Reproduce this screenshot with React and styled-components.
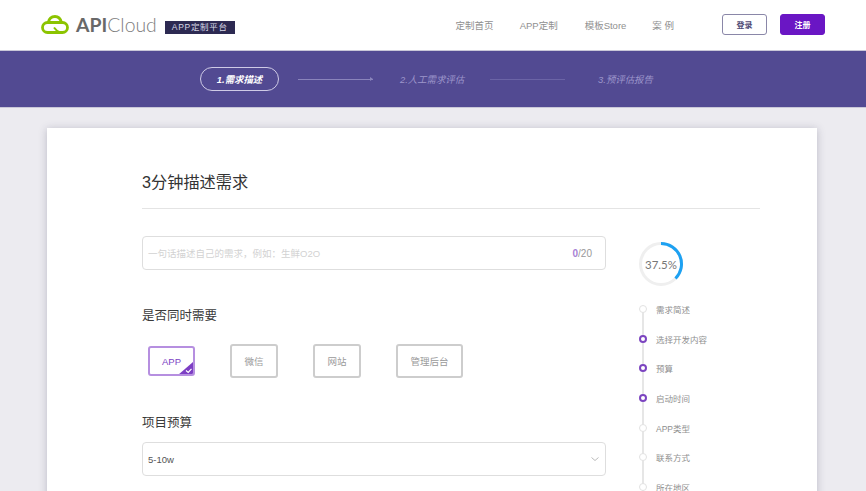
import React from "react";
import styled, { createGlobalStyle } from "styled-components";

const Global = createGlobalStyle`
  html, body { margin: 0; padding: 0; height: 491px; overflow: hidden; background: #ecebf0; }
  body { font-family: "Open Sans", "Noto Sans CJK SC", sans-serif; }
  * { box-sizing: border-box; }
`;
const CJK = `"Liberation Sans", "Noto Sans CJK SC", sans-serif`;

const Page = styled.div`width: 866px; height: 491px; overflow: hidden; font-family: ${CJK};`;
const Header = styled.header`
  height: 51px; background: #fff; display: flex; align-items: center;
  padding: 0 41px 1px 41px; border-bottom: 1px solid #c9c7d8;
`;
const Logo = styled.div`display: flex; align-items: center; height: 32px;`;
const LogoText = styled.span`
  font-family: "Lato", sans-serif; font-size: 19.4px; color: #7d7d7d; margin-left: 7px; font-weight: 300;
  b { font-weight: 700; color: #686868; }
`;
const Badge = styled.span`
  background: #2d2a52; color: #d8d8e6; font-size: 8.5px; letter-spacing: .7px; height: 13px; line-height: 13px;
  padding: 0 0 0 7px; width: 70px; margin: 5px 0 0 8px; white-space: nowrap;
`;
const Nav = styled.nav`display: flex; align-items: center; margin-left: auto; font-size: 9.5px; color: #909090;`;
const NavLink = styled.a`margin-right: ${p => p.$gap}px; white-space: nowrap;`;
const Btn = styled.button`
  width: 45px; height: 21px; border-radius: 3px; font: 700 8px ${CJK}; padding: 0; margin-left: ${p => p.$ml}px;
  color: ${p => p.$solid ? "#fff" : "#4e4a74"}; background: ${p => p.$solid ? "#6a16c4" : "#fff"};
  border: 1px solid ${p => p.$solid ? "#6a16c4" : "#8a87a8"};
`;
const Steps = styled.div`
  height: 57px; background: #524a92; border-bottom: 1px solid #c9c7d8; display: flex; align-items: center; padding: 0 0 0 200px;
  font-size: 9.4px; font-style: italic; color: #9d96cb;
`;
const ActiveStep = styled.div`
  width: 79px; height: 24px; border: 1px solid #cfcbe6; border-radius: 12px; color: #fff; display: flex;
  align-items: center; justify-content: center; font-weight: 700;
`;
const Arrow = styled.div`
  width: 75px; height: 1px; margin: 0 ${p => p.$mr}px 0 ${p => p.$ml}px; background: ${p => p.$c}; position: relative;
  ${p => p.$tip && `&::after { content: ""; position: absolute; right: 0; top: -1.5px; border-left: 3px solid ${p.$c}; border-top: 2px solid transparent; border-bottom: 2px solid transparent; }`}
`;
const StepLabel = styled.span`white-space: nowrap;`;
const Main = styled.main`padding: 20px 49px 0 47px;`;
const Card = styled.section`
  background: #fff; height: 400px; padding: 43px 57px 0 95px; box-shadow: 0 1px 8px rgba(60,60,90,.28);
`;
const Title = styled.h1`
  margin: 0; font: 400 16.2px/22px ${CJK}; color: #333; height: 38px; border-bottom: 1px solid #e4e4e4;
`;
const Columns = styled.div`display: flex; margin-top: 27px;`;
const Left = styled.div`width: 464px;`;
const Field = styled.div`
  height: ${p => p.$h}px; border: 1px solid #dedede; border-radius: 4px; display: flex; align-items: center;
  justify-content: space-between; padding: 0 13px 0 5px; font-size: 9.5px; color: #d2d2d2; white-space: nowrap;
`;
const Count = styled.span`color: #999; font-size: 10px; b { color: #a77fd6; }`;
const Label = styled.h2`margin: ${p => p.$mt}px 0 0; font: 400 12.5px/18px ${CJK}; color: #3a3a3a;`;
const Options = styled.div`display: flex; gap: 35px; margin: 19px 0 0 6px; align-items: center;`;
const Option = styled.div`
  width: ${p => p.$w}px; height: 34px; border: 2px solid #cdcdcd; border-radius: 3px; display: flex; align-items: center;
  justify-content: center; font-size: 9.5px; color: #9a9a9a; background: #fff;
`;
const Selected = styled(Option)`
  width: 47px; height: 30px; border-color: #b68fe0; color: #7d3fc4; position: relative; overflow: hidden;
`;
const Corner = styled.svg`position: absolute; right: -1px; bottom: -1px;`;
const Select = styled(Field)`color: #555; padding-right: 5px; margin-top: ${p => p.$mt}px;`;
const Side = styled.aside`margin: 5px 0 0 32px; width: 120px;`;
const Ring = styled.div`
  width: 46px; height: 46px; position: relative; display: flex; align-items: center; justify-content: center;
  font: 400 11.5px "Lato", sans-serif; color: #777;
  svg { position: absolute; inset: 0; }
`;
const Timeline = styled.ul`list-style: none; margin: 7px 0 0; padding: 0 0 0 1px;`;
const TItem = styled.li`
  height: 29.7px; display: flex; align-items: center; gap: 9px; font-size: 8.5px; color: #8f8f8f; position: relative; white-space: nowrap;
  &::before { content: ""; position: absolute; left: 3px; top: 14px; width: 2px; height: 30px; background: #e6e6e6; }
`;
const Dot = styled.i`
  width: 8px; height: 8px; border-radius: 50%; background: #fff; position: relative; z-index: 1; flex: none;
  border: ${p => p.$on ? "2px solid #7c45c0" : "1.5px solid #e2e2e2"};
`;

const timeline = [["需求简述"], ["选择开发内容", 1], ["预算", 1], ["启动时间", 1], ["APP类型"], ["联系方式"], ["所在地区"]];

export default function App() {
  return (
    <Page>
      <Global />
      <Header>
        <Logo>
          <svg width="28" height="19" viewBox="0 0 28 19" fill="none" stroke="#8cc400" strokeWidth="2.8">
            <path d="M7 8C8 3.5 11 1.5 14 1.5c3.5 0 5.5 2 6.5 6" />
            <rect x="1.5" y="7.5" width="25" height="10" rx="5" />
            <path d="M13 12.5c2 3 4 4 6 5" strokeWidth="2" />
          </svg>
          <LogoText><b>API</b>Cloud</LogoText>
          <Badge>APP定制平台</Badge>
        </Logo>
        <Nav>
          <NavLink $gap={26}>定制首页</NavLink>
          <NavLink $gap={27}>APP定制</NavLink>
          <NavLink $gap={26}>模板Store</NavLink>
          <NavLink $gap={0}>案 例</NavLink>
          <Btn $ml={48}>登录</Btn>
          <Btn $solid $ml={13}>注册</Btn>
        </Nav>
      </Header>
      <Steps>
        <ActiveStep>1.需求描述</ActiveStep>
        <Arrow $c="#8a84bb" $tip $ml={19} $mr={27} />
        <StepLabel>2.人工需求评估</StepLabel>
        <Arrow $c="#6b64a6" $ml={26} $mr={33} />
        <StepLabel>3.预评估报告</StepLabel>
      </Steps>
      <Main>
        <Card>
          <Title>3分钟描述需求</Title>
          <Columns>
            <Left>
              <Field $h={34}>
                <span>一句话描述自己的需求，例如：生鲜O2O</span>
                <Count><b>0</b>/20</Count>
              </Field>
              <Label $mt={37}>是否同时需要</Label>
              <Options>
                <Selected>
                  APP
                  <Corner width="16" height="14" viewBox="0 0 16 14">
                    <path d="M16 0V14H0Z" fill="#7d3fc4" />
                    <path d="M8 9.5l2.2 2 3.3-3.6" stroke="#fff" strokeWidth="1.2" fill="none" />
                  </Corner>
                </Selected>
                <Option $w={48}>微信</Option>
                <Option $w={48}>网站</Option>
                <Option $w={67}>管理后台</Option>
              </Options>
              <Label $mt={36}>项目预算</Label>
              <Select $h={34} $mt={10}>
                <span>5-10w</span>
                <svg width="10" height="10" viewBox="0 0 10 10" fill="none" stroke="#bbb" strokeWidth="1">
                  <path d="M1.5 3.5L5 6.5l3.5-3" />
                </svg>
              </Select>
            </Left>
            <Side>
              <Ring>
                <svg width="46" height="46" viewBox="0 0 46 46" fill="none" strokeWidth="3">
                  <circle cx="23" cy="23" r="20.5" stroke="#efefef" />
                  <path d="M23 2.5A20.5 20.5 0 0 1 37.5 37.5" stroke="#1da1f2" />
                </svg>
                37.5%
              </Ring>
              <Timeline>
                {timeline.map(([t, on]) => (
                  <TItem key={t}><Dot $on={on} />{t}</TItem>
                ))}
              </Timeline>
            </Side>
          </Columns>
        </Card>
      </Main>
    </Page>
  );
}
